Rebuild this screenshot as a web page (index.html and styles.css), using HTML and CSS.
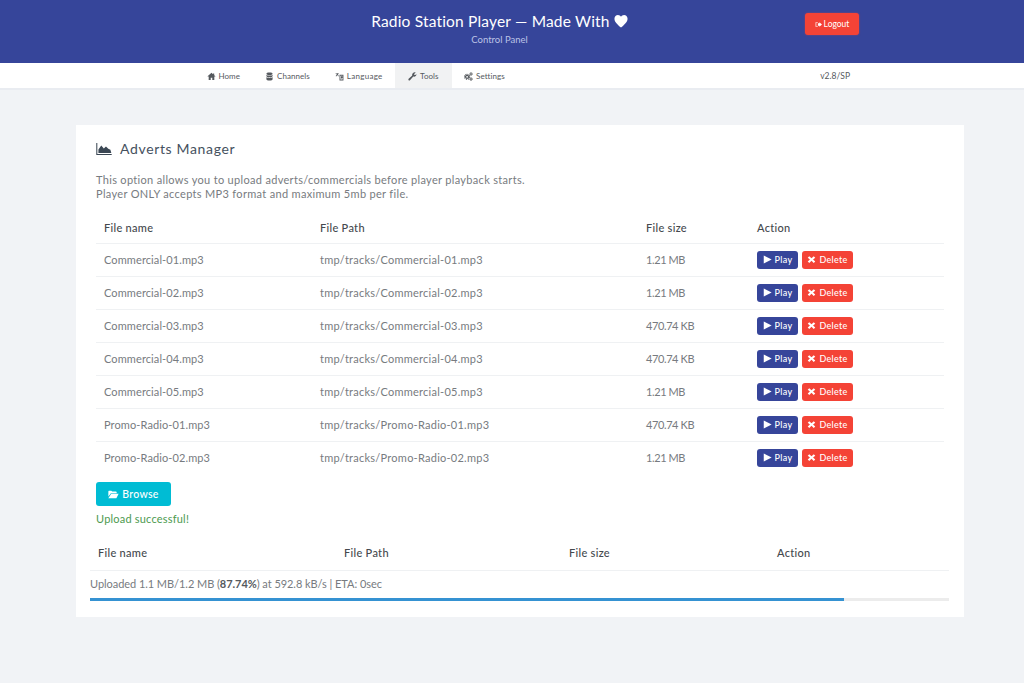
FILE: index.html
```html
<!DOCTYPE html>
<html lang="en">
<head>
  <meta charset="UTF-8">
  <title>Radio Station Player - Control Panel</title>
  <link rel="stylesheet" href="styles.css">
</head>
<body>
  <svg class="sprite" xmlns="http://www.w3.org/2000/svg">
    <symbol id="i-home" viewBox="0 0 16 16"><path d="M8 1.500 1 7.600l.8.900L3 7.500V14h3.600v-4h2.800v4H13V7.500l1.200 1 .8-.9-2.200-1.900V2.500h-2v1.500z"/></symbol>
    <symbol id="i-db" viewBox="0 0 16 16"><path d="M8 1C4.700 1 2.500 2 2.500 3.300S4.700 5.600 8 5.600s5.500-1 5.500-2.300S11.300 1 8 1zM2.500 5v2.300C2.500 8.600 4.700 9.500 8 9.500s5.500-.9 5.500-2.200V5c-1 1-3 1.600-5.500 1.600S3.500 6 2.500 5zm0 3.900v3.800C2.500 14 4.700 15 8 15s5.500-1 5.500-2.300V8.900c-1 1-3 1.600-5.500 1.600s-4.500-.6-5.500-1.600z"/></symbol>
    <symbol id="i-lang" viewBox="0 0 16 16"><path d="M1 2h6v1.300H5.300c.2 1.500.6 2.700 1.300 3.800l-.9.900C5 7.200 4.500 6.200 4.200 5 3.700 6.200 3 7.200 2 8l-.8-1c1.100-.9 1.800-2.200 2-3.700H1zM8 5h7v10H8zm1.500 1.500v7h4v-7zm1 1h2c.6 0 1 .4 1 1v1c0 .6-.4 1-1 1h-1v2h-1z"/></symbol>
    <symbol id="i-wrench" viewBox="0 0 16 16"><path d="M15 4.200c0 2.300-1.900 4.100-4.200 4.100-.5 0-1-.1-1.400-.2L3.500 14.600c-.7.700-1.800.7-2.400 0-.7-.7-.7-1.700 0-2.400l6.500-5.900c-.2-.5-.3-1-.3-1.600C7.800 2.400 9.600.6 11.900.6c.6 0 1.200.1 1.700.4L11 3.500l.3 1.700 1.700.3 2.500-2.500c-.3.200-.5.400-.5.700z"/></symbol>
    <symbol id="i-cogs" viewBox="0 0 16 16">
      <g fill="none" stroke="currentColor">
        <circle cx="5.500" cy="8.500" r="2.700" stroke-width="2.200"/>
        <circle cx="5.500" cy="8.500" r="4.600" stroke-width="1.800" stroke-dasharray="2 1.610"/>
        <circle cx="12.500" cy="3.500" r="1.500" stroke-width="1.500"/>
        <circle cx="12.500" cy="3.500" r="2.700" stroke-width="1.200" stroke-dasharray="1.200 .92"/>
        <circle cx="12.500" cy="12.500" r="1.500" stroke-width="1.500"/>
        <circle cx="12.500" cy="12.500" r="2.700" stroke-width="1.200" stroke-dasharray="1.200 .92"/>
      </g>
    </symbol>
    <symbol id="i-area" viewBox="0 0 18 14"><path d="M0 0h1.200v12.800H18V14H0z"/><path d="M2.500 11.800V7.500L5.800 3l3 3.500 2.500-2.500 2.700 2.600 2.500 1.400 1 3.800z"/></symbol>
    <symbol id="i-play" viewBox="0 0 12 12"><path d="M1 .8 11.500 6 1 11.200z"/></symbol>
    <symbol id="i-times" viewBox="0 0 12 12"><path d="M3 1.500 6 4.300l3-2.800L11 3.500 8.100 6 11 8.500 9 10.500 6 7.700l-3 2.800L1 8.500 3.900 6 1 3.500z"/></symbol>
    <symbol id="i-folder" viewBox="0 0 16 14"><path d="M0 2.500C0 1.700.6 1 1.400 1h3.200l1.500 1.500h5.500c.8 0 1.400.6 1.400 1.400V5H4L0 10z"/><path d="M4.500 6H16l-3.500 7H0z"/></symbol>
    <symbol id="i-logout" viewBox="0 0 12 12"><path d="M1 2h4v1.200H2.200v5.600H5V10H1z"/><path d="M5 4h2.500V2L12 6l-4.500 4V8H5z"/></symbol>
    <symbol id="i-heart" viewBox="0 0 16 16"><path d="M8 15.500C3.500 11.500.5 8.700.5 5.300.5 2.700 2.400 1 4.500 1 6 1 7.300 1.800 8 3c.7-1.200 2-2 3.500-2 2.100 0 4 1.700 4 4.300 0 3.400-3 6.200-7.500 10.200z"/></symbol>
  </svg>

  <header class="topbar">
    <div class="brand">
      <h1>Radio Station Player — Made With <svg class="heart"><use href="#i-heart"/></svg></h1>
      <p>Control Panel</p>
    </div>
    <a class="btn btn-logout"><svg class="ico"><use href="#i-logout"/></svg> Logout</a>
  </header>

  <nav class="navbar">
    <ul class="menu">
      <li><svg class="ico"><use href="#i-home"/></svg>Home</li>
      <li><svg class="ico"><use href="#i-db"/></svg>Channels</li>
      <li class="wide"><svg class="ico"><use href="#i-lang"/></svg>Language</li>
      <li class="active"><svg class="ico"><use href="#i-wrench"/></svg>Tools</li>
      <li><svg class="ico"><use href="#i-cogs"/></svg>Settings</li>
    </ul>
    <span class="version">v2.8/SP</span>
  </nav>

  <main class="panel">
    <h2><svg class="title-ico"><use href="#i-area"/></svg>Adverts Manager</h2>
    <p class="intro">This option allows you to upload adverts/commercials before player playback starts.<br>
    Player ONLY accepts MP3 format and maximum 5mb per file.</p>

    <table class="files">
      <thead>
        <tr><th class="c-name">File name</th><th class="c-path">File Path</th><th class="c-size">File size</th><th>Action</th></tr>
      </thead>
      <tbody>
        <tr><td>Commercial-01.mp3</td><td>tmp/tracks/Commercial-01.mp3</td><td>1.21 MB</td><td><a class="btn btn-play"><svg class="ico"><use href="#i-play"/></svg>Play</a><a class="btn btn-del"><svg class="ico"><use href="#i-times"/></svg>Delete</a></td></tr>
        <tr><td>Commercial-02.mp3</td><td>tmp/tracks/Commercial-02.mp3</td><td>1.21 MB</td><td><a class="btn btn-play"><svg class="ico"><use href="#i-play"/></svg>Play</a><a class="btn btn-del"><svg class="ico"><use href="#i-times"/></svg>Delete</a></td></tr>
        <tr><td>Commercial-03.mp3</td><td>tmp/tracks/Commercial-03.mp3</td><td>470.74 KB</td><td><a class="btn btn-play"><svg class="ico"><use href="#i-play"/></svg>Play</a><a class="btn btn-del"><svg class="ico"><use href="#i-times"/></svg>Delete</a></td></tr>
        <tr><td>Commercial-04.mp3</td><td>tmp/tracks/Commercial-04.mp3</td><td>470.74 KB</td><td><a class="btn btn-play"><svg class="ico"><use href="#i-play"/></svg>Play</a><a class="btn btn-del"><svg class="ico"><use href="#i-times"/></svg>Delete</a></td></tr>
        <tr><td>Commercial-05.mp3</td><td>tmp/tracks/Commercial-05.mp3</td><td>1.21 MB</td><td><a class="btn btn-play"><svg class="ico"><use href="#i-play"/></svg>Play</a><a class="btn btn-del"><svg class="ico"><use href="#i-times"/></svg>Delete</a></td></tr>
        <tr><td>Promo-Radio-01.mp3</td><td>tmp/tracks/Promo-Radio-01.mp3</td><td>470.74 KB</td><td><a class="btn btn-play"><svg class="ico"><use href="#i-play"/></svg>Play</a><a class="btn btn-del"><svg class="ico"><use href="#i-times"/></svg>Delete</a></td></tr>
        <tr><td>Promo-Radio-02.mp3</td><td>tmp/tracks/Promo-Radio-02.mp3</td><td>1.21 MB</td><td><a class="btn btn-play"><svg class="ico"><use href="#i-play"/></svg>Play</a><a class="btn btn-del"><svg class="ico"><use href="#i-times"/></svg>Delete</a></td></tr>
      </tbody>
    </table>

    <a class="btn btn-browse"><svg class="ico"><use href="#i-folder"/></svg>Browse</a>
    <p class="success">Upload successful!</p>

    <div class="uploads">
      <table class="queue">
        <thead>
          <tr><th class="q-name">File name</th><th class="q-path">File Path</th><th class="q-size">File size</th><th>Action</th></tr>
        </thead>
      </table>
      <p class="status">Uploaded 1.1 MB/1.2 MB (<strong>87.74%</strong>) at 592.8 kB/s | ETA: 0sec</p>
      <div class="progress"><div class="progress-bar" style="width: 87.74%"></div></div>
    </div>
  </main>
</body>
</html>
```

FILE: styles.css
```css
* {
  margin: 0;
  padding: 0;
  box-sizing: border-box;
}

body {
  font-family: Lato, "Noto Sans", sans-serif;
  font-size: 11px;
  background: #f1f3f6;
  color: #777b80;
  height: 683px;
  overflow: hidden;
}

.sprite {
  display: none;
}

.ico {
  width: 9px;
  height: 9px;
  fill: currentColor;
  flex: none;
}

/* header */
.topbar {
  height: 63px;
  background: #36459a;
  color: #fff;
  position: relative;
  display: flex;
  justify-content: center;
  padding: 11px 25px 0 0;
}

.brand {
  text-align: center;
}

.brand h1 {
  font-size: 15.5px;
  font-weight: 400;
  line-height: 20px;
  letter-spacing: 0.18px;
}

.heart {
  width: 14px;
  height: 14px;
  fill: #fff;
  vertical-align: -1px;
}

.brand p {
  font-size: 9.5px;
  line-height: 14px;
  margin-top: 2px;
  color: #bcc3e6;
}

.btn {
  display: inline-flex;
  align-items: center;
  border-radius: 3px;
  color: #fff;
}

.btn-logout {
  position: absolute;
  left: 805px;
  top: 13px;
  width: 54px;
  height: 22px;
  justify-content: center;
  gap: 2px;
  font-size: 8.5px;
  background: #f44336;
  box-shadow: 0 0 2px rgba(244, 67, 54, 0.6);
}

.btn-logout .ico {
  width: 7px;
  height: 7px;
}

/* nav */
.navbar {
  height: 27px;
  background: #fff;
  border-bottom: 2px solid #e9ecf1;
  display: flex;
  justify-content: space-between;
  padding: 0 174px 0 194px;
}

.menu {
  display: flex;
  list-style: none;
}

.menu li {
  display: flex;
  align-items: center;
  gap: 3px;
  padding: 1px 12.5px 0;
  font-size: 8px;
  letter-spacing: 0.05px;
  color: #55595e;
}

.menu .wide {
  letter-spacing: 0.3px;
}

.menu .active {
  padding: 1px 13px 0;
  background: #f1f2f3;
}

.version {
  font-size: 8.5px;
  line-height: 27px;
  color: #55595e;
}

/* panel */
.panel {
  width: 888px;
  height: 492px;
  margin: 35px 0 0 76px;
  padding: 14px 20px 0;
  background: #fff;
}

.panel h2 {
  display: flex;
  align-items: center;
  font-size: 14px;
  font-weight: 400;
  line-height: 20px;
  letter-spacing: 0.65px;
  color: #45515e;
}

.title-ico {
  width: 16px;
  height: 12px;
  fill: #3b4754;
  margin-right: 8px;
}

.intro {
  margin-top: 14px;
  font-size: 11px;
  line-height: 14px;
  letter-spacing: 0.32px;
}

table {
  border-collapse: collapse;
  table-layout: fixed;
}

.files {
  width: 848px;
  margin-top: 11px;
}

.files th,
.queue th {
  text-align: left;
  font-size: 11px;
  font-weight: 500;
  color: #45494e;
  padding: 0 8px;
  letter-spacing: 0.3px;
}

.files th {
  height: 31px;
  border-bottom: 1px solid #eff1f3;
}

.c-name { width: 216px; }
.c-path { width: 326px; }
.c-size { width: 111px; }

.files td {
  height: 33px;
  padding: 0 8px;
  border-bottom: 1px solid #eff1f3;
  font-size: 11px;
  letter-spacing: 0.25px;
  white-space: nowrap;
}

.files td:first-child {
  letter-spacing: 0.1px;
}

.files td:nth-child(3) {
  letter-spacing: -0.4px;
}

.files tr:last-child td {
  border-bottom: 0;
}

.files .btn {
  height: 18px;
  font-size: 9px;
  letter-spacing: 0.3px;
  font-weight: 500;
  vertical-align: middle;
  gap: 3px;
  justify-content: center;
}

.btn-play {
  width: 41px;
  background: #36459a;
  margin-right: 4px;
}

.btn-del {
  width: 51px;
  background: #f44336;
}

.btn-browse {
  height: 24px;
  width: 75px;
  margin-top: 8px;
  justify-content: center;
  gap: 3px;
  font-size: 10.5px;
  font-weight: 500;
  letter-spacing: 0.3px;
  background: #00bcd4;
}

.btn-browse .ico {
  width: 11px;
}

.success {
  margin-top: 6px;
  font-size: 11px;
  line-height: 14px;
  letter-spacing: 0.2px;
  color: #4d9a4f;
}

/* upload queue */
.uploads {
  margin: 8px 0 0 -6px;
  width: 859px;
}

.queue {
  width: 859px;
}

.queue th {
  height: 36px;
  padding-top: 2px;
  border-bottom: 1px solid #eff1f3;
}

.q-name { width: 246px; }
.q-path { width: 225px; }
.q-size { width: 208px; }

.status {
  margin-top: 6px;
  font-size: 11px;
  line-height: 14px;
  letter-spacing: -0.05px;
}

.status strong {
  color: #55595e;
}

.progress {
  margin-top: 7px;
  height: 3px;
  background: #ececec;
}

.progress-bar {
  height: 100%;
  background: #3592d2;
}
```
